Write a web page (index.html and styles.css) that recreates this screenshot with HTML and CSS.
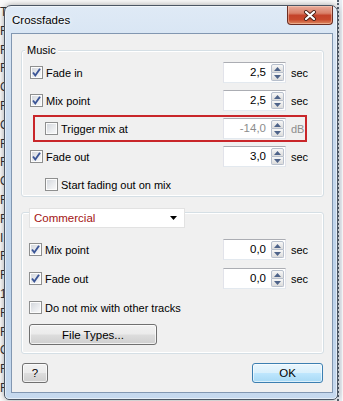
FILE: index.html
```html
<!DOCTYPE html>
<html lang="en">
<head>
    <meta charset="UTF-8">
    <meta name="viewport" content="width=device-width, initial-scale=1.0">
    <title>Crossfades</title>
    <link rel="stylesheet" href="styles.css">
</head>
<body>

<!-- list of the main window, mostly hidden behind the dialog -->
<div class="backdrop">
    <div class="list">
        <span>T</span><span>R</span><span>R</span><span>R</span><span>O</span><span>R</span>
        <span>O</span><span>R</span><span>R</span><span>O</span><span>R</span><span>R</span>
        <span>I</span><span>R</span><span>R</span><span>1</span><span>R</span><span>R</span>
        <span>O</span><span>R</span><span>R</span>
    </div>
    <div class="edge"></div>
</div>

<div class="window">
    <div class="titlebar">
        <span class="title">Crossfades</span>
        <span class="close">
            <svg width="14" height="11" viewBox="0 0 14 11">
                <path d="M3 2 L11 9 M11 2 L3 9" stroke="#4a2218" stroke-width="4" stroke-linecap="round"/>
                <path d="M3 2 L11 9 M11 2 L3 9" stroke="#fff" stroke-width="2.2" stroke-linecap="round"/>
            </svg>
        </span>
    </div>

    <div class="client">
        <div class="group music">
            <span class="legend">Music</span>
            <div class="rows">
                <div class="row">
                    <span class="check on"><svg width="11" height="11" viewBox="0 0 11 11"><path d="M2 5.5 L4.3 8.5 L9 1.8" fill="none" stroke="#3b5596" stroke-width="1.9"/></svg></span>
                    <span class="label">Fade in</span>
                    <span class="spin"><span class="val">2,5</span><span class="arrows"><span class="up"><svg width="7" height="4" viewBox="0 0 7 4"><path d="M0 4 L3.5 0 L7 4Z" fill="#4e6389"/></svg></span><span class="down"><svg width="7" height="4" viewBox="0 0 7 4"><path d="M0 0 L3.5 4 L7 0Z" fill="#4e6389"/></svg></span></span></span>
                    <span class="unit">sec</span>
                </div>
                <div class="row">
                    <span class="check on"><svg width="11" height="11" viewBox="0 0 11 11"><path d="M2 5.5 L4.3 8.5 L9 1.8" fill="none" stroke="#3b5596" stroke-width="1.9"/></svg></span>
                    <span class="label">Mix point</span>
                    <span class="spin"><span class="val">2,5</span><span class="arrows"><span class="up"><svg width="7" height="4" viewBox="0 0 7 4"><path d="M0 4 L3.5 0 L7 4Z" fill="#4e6389"/></svg></span><span class="down"><svg width="7" height="4" viewBox="0 0 7 4"><path d="M0 0 L3.5 4 L7 0Z" fill="#4e6389"/></svg></span></span></span>
                    <span class="unit">sec</span>
                </div>
                <div class="alert">
                    <div class="row">
                        <span class="check"></span>
                        <span class="label">Trigger mix at</span>
                        <span class="spin off"><span class="val">-14,0</span><span class="arrows"><span class="up"><svg width="7" height="4" viewBox="0 0 7 4"><path d="M0 4 L3.5 0 L7 4Z" fill="#4e6389"/></svg></span><span class="down"><svg width="7" height="4" viewBox="0 0 7 4"><path d="M0 0 L3.5 4 L7 0Z" fill="#4e6389"/></svg></span></span></span>
                        <span class="unit off">dB</span>
                    </div>
                </div>
                <div class="row">
                    <span class="check on"><svg width="11" height="11" viewBox="0 0 11 11"><path d="M2 5.5 L4.3 8.5 L9 1.8" fill="none" stroke="#3b5596" stroke-width="1.9"/></svg></span>
                    <span class="label">Fade out</span>
                    <span class="spin"><span class="val">3,0</span><span class="arrows"><span class="up"><svg width="7" height="4" viewBox="0 0 7 4"><path d="M0 4 L3.5 0 L7 4Z" fill="#4e6389"/></svg></span><span class="down"><svg width="7" height="4" viewBox="0 0 7 4"><path d="M0 0 L3.5 4 L7 0Z" fill="#4e6389"/></svg></span></span></span>
                    <span class="unit">sec</span>
                </div>
                <div class="row indent">
                    <span class="check"></span>
                    <span class="label">Start fading out on mix</span>
                </div>
            </div>
        </div>

        <div class="group commercial">
            <div class="select">
                <span>Commercial</span>
                <svg width="7" height="4" viewBox="0 0 7 4"><path d="M0 0 L7 0 L3.5 4Z" fill="#000"/></svg>
            </div>
            <div class="rows">
                <div class="row">
                    <span class="check on"><svg width="11" height="11" viewBox="0 0 11 11"><path d="M2 5.5 L4.3 8.5 L9 1.8" fill="none" stroke="#3b5596" stroke-width="1.9"/></svg></span>
                    <span class="label">Mix point</span>
                    <span class="spin"><span class="val">0,0</span><span class="arrows"><span class="up"><svg width="7" height="4" viewBox="0 0 7 4"><path d="M0 4 L3.5 0 L7 4Z" fill="#4e6389"/></svg></span><span class="down"><svg width="7" height="4" viewBox="0 0 7 4"><path d="M0 0 L3.5 4 L7 0Z" fill="#4e6389"/></svg></span></span></span>
                    <span class="unit">sec</span>
                </div>
                <div class="row">
                    <span class="check on"><svg width="11" height="11" viewBox="0 0 11 11"><path d="M2 5.5 L4.3 8.5 L9 1.8" fill="none" stroke="#3b5596" stroke-width="1.9"/></svg></span>
                    <span class="label">Fade out</span>
                    <span class="spin"><span class="val">0,0</span><span class="arrows"><span class="up"><svg width="7" height="4" viewBox="0 0 7 4"><path d="M0 4 L3.5 0 L7 4Z" fill="#4e6389"/></svg></span><span class="down"><svg width="7" height="4" viewBox="0 0 7 4"><path d="M0 0 L3.5 4 L7 0Z" fill="#4e6389"/></svg></span></span></span>
                    <span class="unit">sec</span>
                </div>
                <div class="row">
                    <span class="check"></span>
                    <span class="label">Do not mix with other tracks</span>
                </div>
                <button class="btn types">File Types...</button>
            </div>
        </div>

        <div class="buttons">
            <button class="btn help">?</button>
            <button class="btn default">OK</button>
        </div>
    </div>
</div>

</body>
</html>
```

FILE: styles.css
```css
body {
    margin: 0;
    height: 401px;
    overflow: hidden;
    background: #fafafa;
    font-family: "Liberation Sans", Arial, sans-serif;
    font-size: 11px;
    color: #000;
}

.backdrop {
    display: flex;
    justify-content: space-between;
    height: 401px;
}

.list {
    display: flex;
    flex-direction: column;
    padding-top: 3px;
    width: 12px;
    color: #333;
    font-size: 12px;
    line-height: 18.8px;
}

.edge {
    width: 3px;
    margin-right: 1px;
    border-left: 2px dotted #55606e;
    background: #e8edf3;
}

/* dialog frame */
.window {
    position: absolute;
    left: 4px;
    top: 5px;
    width: 334px;
    height: 395px;
    box-sizing: border-box;
    display: flex;
    flex-direction: column;
    padding: 0 4px 6px 6px;
    border: 1px solid #4b5664;
    border-radius: 7px 7px 5px 5px;
    background: linear-gradient(180deg, #dfeaf6 0%, #cbdcef 25%, #bcd2ea 70%, #c6d9ee 100%);
    box-shadow: inset 0 0 0 1px rgba(255, 255, 255, 0.55), 0 0 6px rgba(0, 0, 0, 0.35);
}

.titlebar {
    height: 27px;
    display: flex;
    justify-content: space-between;
    align-items: flex-start;
}

.title {
    padding: 7px 0 0 1px;
    font-size: 11.5px;
    line-height: 14px;
    text-shadow: 0 0 6px #fff, 0 0 3px #fff;
}

.close {
    width: 46px;
    height: 19px;
    box-sizing: border-box;
    display: flex;
    justify-content: center;
    align-items: center;
    border: 1px solid #6b2d22;
    border-top: none;
    border-radius: 0 0 4px 4px;
    background: linear-gradient(180deg, #e9ab9a 0%, #d98069 40%, #c4432a 52%, #c8492c 75%, #dd8a62 100%);
    box-shadow: inset 0 0 0 1px rgba(255, 220, 200, 0.45);
}

.client {
    flex: 1;
    display: flex;
    flex-direction: column;
    border: 1px solid #8297b1;
    background: #f0f0f0;
}

/* group boxes */
.group {
    margin: 16px 8px 0 9px;
    border: 1px solid #d5dfe5;
    border-radius: 3px;
    box-shadow: inset 0 0 0 1px #fff;
}

.legend {
    display: block;
    width: fit-content;
    margin: -8px 0 0 3px;
    padding: 0 2px;
    line-height: 14px;
    background: #f0f0f0;
}

.rows {
    display: flex;
    flex-direction: column;
    gap: 7px;
    padding: 5px 6px 1px 8px;
}

.row {
    height: 21px;
    display: flex;
    align-items: center;
}

.row.indent {
    padding-left: 15px;
}

.check {
    width: 13px;
    height: 13px;
    box-sizing: border-box;
    display: flex;
    justify-content: center;
    align-items: center;
    margin-right: 3px;
    border: 1px solid #8e8f8f;
    background: linear-gradient(135deg, #d0d4da 0%, #e9ebee 55%, #fbfbfb 100%);
    box-shadow: inset 0 0 0 1px #fcfcfc;
}

.label {
    flex: 1;
    white-space: nowrap;
}

.spin {
    width: 63px;
    height: 21px;
    box-sizing: border-box;
    display: flex;
    border: 1px solid #e2e3ea;
    border-top-color: #abadb3;
    border-bottom-color: #e3e9ef;
    background: #fff;
}

.val {
    flex: 1;
    text-align: right;
    padding-right: 5px;
    line-height: 19px;
    font-size: 11.5px;
}

.spin.off .val {
    color: #8d8d8d;
}

.arrows {
    width: 13px;
    margin: 1px 1px 1px 0;
    display: flex;
    flex-direction: column;
}

.up, .down {
    flex: 1;
    display: flex;
    justify-content: center;
    align-items: center;
    border: 1px solid #b7bfcc;
    background: linear-gradient(180deg, #f7f7f7, #dcdcdc);
}

.up {
    border-radius: 2px 2px 0 0;
}

.down {
    border-top: none;
    border-radius: 0 0 2px 2px;
}

.unit {
    width: 26px;
    margin-left: 5px;
}

.unit.off {
    width: 14px;
    color: #8d8d8d;
}

/* red highlight round the trigger option */
.alert {
    margin: -3px 10px -3px 3px;
    padding: 1px 0 1px 10px;
    border: 2px solid #c9262a;
}

/* second group, headed by the drop-down */
.select {
    width: 156px;
    height: 20px;
    box-sizing: border-box;
    display: flex;
    justify-content: space-between;
    align-items: center;
    margin: -5px 0 0 7px;
    padding: 0 7px 0 4px;
    border: 1px solid #e2e2e2;
    background: #fff;
    color: #a31313;
    font-size: 11.5px;
}

.commercial {
    margin-top: 15px;
}

.commercial .rows {
    gap: 8px;
    padding: 11px 6px 8px 7px;
}

.btn {
    height: 21px;
    padding: 0;
    border: 1px solid #707070;
    border-radius: 3px;
    background: linear-gradient(180deg, #f2f2f2 0%, #ebebeb 48%, #dddddd 52%, #cfcfcf 100%);
    box-shadow: inset 0 0 0 1px rgba(255, 255, 255, 0.7);
    font-family: "Liberation Sans", Arial, sans-serif;
    font-size: 11.5px;
    color: #000;
}

.types {
    width: 128px;
    margin-top: -2px;
}

.buttons {
    display: flex;
    justify-content: space-between;
    margin-top: 9px;
    padding: 0 9px 0 10px;
}

.help {
    width: 26px;
    height: 20px;
}

.default {
    width: 71px;
    height: 20px;
    border-color: #3c7fb1;
    background: linear-gradient(180deg, #eaf6fd 0%, #d9f0fc 48%, #bee6fd 52%, #a7d9f5 100%);
    box-shadow: inset 0 0 0 1px rgba(255, 255, 255, 0.6);
}
```
